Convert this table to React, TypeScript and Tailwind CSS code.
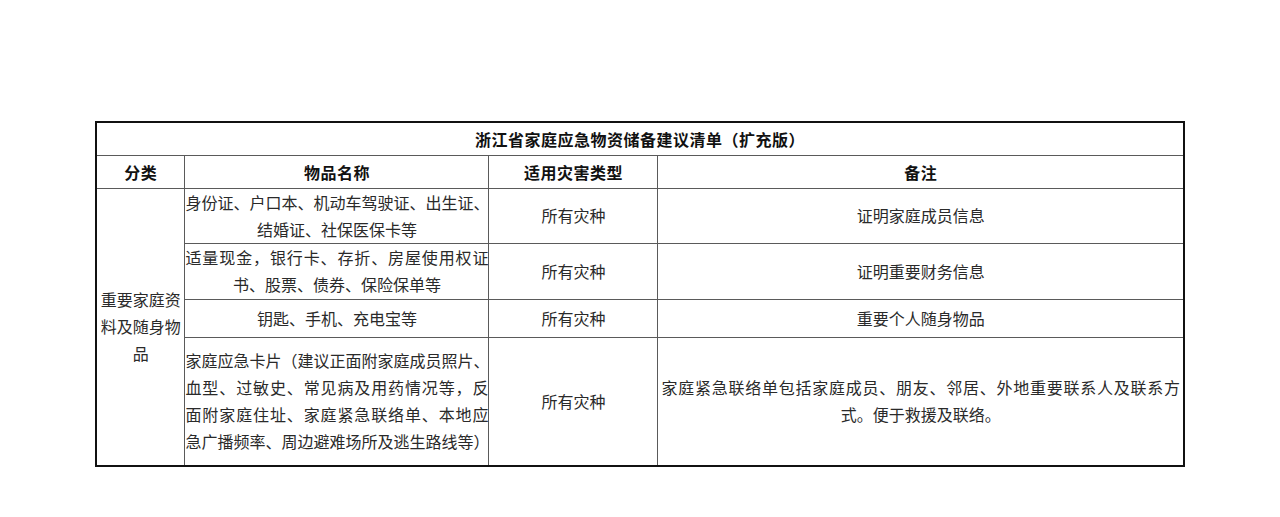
import React from "react"

const cell =
  "border border-[#5a5a5a] p-0 align-middle text-center text-[16px] leading-[27px] text-[#2a2a2a] font-normal"
const head =
  "border border-[#5a5a5a] p-0 align-middle text-center text-[16px] leading-[20px] text-[#111] font-bold tracking-[0.5px]"

// a line that is stretched across the whole cell, as Word does for wrapped lines
function Full({ children }: { children: React.ReactNode }) {
  return <div className="whitespace-nowrap text-justify [text-align-last:justify]">{children}</div>
}

function Center({ children }: { children: React.ReactNode }) {
  return <div className="whitespace-nowrap text-center">{children}</div>
}

export default function App() {
  return (
    <div className="min-h-[517px] w-full bg-white pt-[121px] font-['Noto_Sans_CJK_SC',sans-serif]">
      <table
        lang="zh"
        className="mx-auto w-[1088px] table-fixed border-collapse border-2 border-[#111]"
      >
        <colgroup>
          <col className="w-[89px]" />
          <col className="w-[304px]" />
          <col className="w-[169px]" />
          <col className="w-[526px]" />
        </colgroup>
        <tbody>
          <tr className="h-[33px]">
            <td colSpan={4} className={head}>
              浙江省家庭应急物资储备建议清单（扩充版）
            </td>
          </tr>
          <tr className="h-[33px]">
            <td className={head}>分类</td>
            <td className={head}>物品名称</td>
            <td className={head}>适用灾害类型</td>
            <td className={head}>备注</td>
          </tr>

          <tr className="h-[55px]">
            <td rowSpan={4} className={cell}>
              <Center>重要家庭资</Center>
              <Center>料及随身物</Center>
              <Center>品</Center>
            </td>
            <td className={cell}>
              <Full>身份证、户口本、机动车驾驶证、出生证、</Full>
              <Center>结婚证、社保医保卡等</Center>
            </td>
            <td className={cell}>所有灾种</td>
            <td className={cell}>证明家庭成员信息</td>
          </tr>

          <tr className="h-[56px]">
            <td className={cell}>
              <Full>适量现金，银行卡、存折、房屋使用权证</Full>
              <Center>书、股票、债券、保险保单等</Center>
            </td>
            <td className={cell}>所有灾种</td>
            <td className={cell}>证明重要财务信息</td>
          </tr>

          <tr className="h-[38px]">
            <td className={cell}>钥匙、手机、充电宝等</td>
            <td className={cell}>所有灾种</td>
            <td className={cell}>重要个人随身物品</td>
          </tr>

          <tr className="h-[129px]">
            <td className={cell}>
              <Full>家庭应急卡片（建议正面附家庭成员照片、</Full>
              <Full>血型、过敏史、常见病及用药情况等，反</Full>
              <Full>面附家庭住址、家庭紧急联络单、本地应</Full>
              <Full>急广播频率、周边避难场所及逃生路线等）</Full>
            </td>
            <td className={cell}>所有灾种</td>
            <td className={cell}>
              <div className="px-[3px]">
                <Full>家庭紧急联络单包括家庭成员、朋友、邻居、外地重要联系人及联系方</Full>
                <Center>式。便于救援及联络。</Center>
              </div>
            </td>
          </tr>
        </tbody>
      </table>
    </div>
  )
}
